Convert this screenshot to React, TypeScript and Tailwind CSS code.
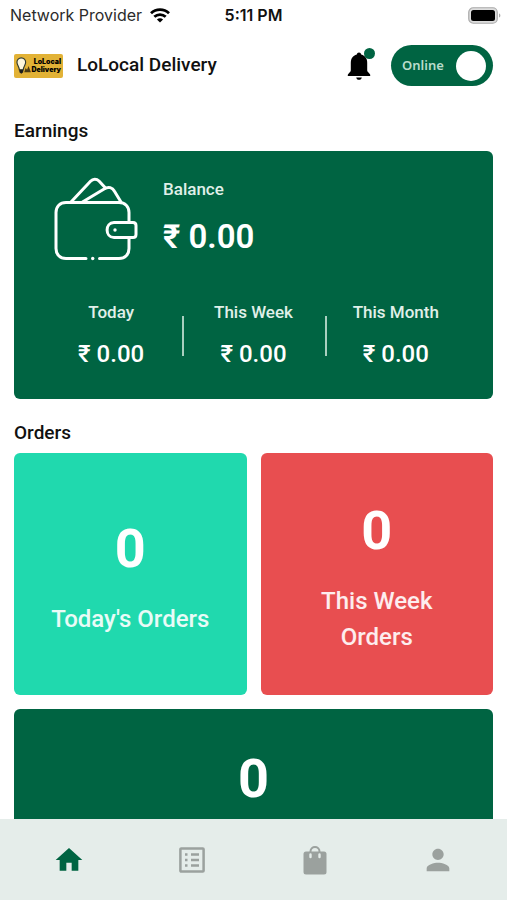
import { useState } from 'react'
import type { ReactNode } from 'react'
import clsx from 'clsx'
import { MdHome, MdPerson } from 'react-icons/md'

// ─── Data ─────────────────────────────────────────────────────────────────────

const EARNINGS = [
  { label: 'Today', amount: 0 },
  { label: 'This Week', amount: 0 },
  { label: 'This Month', amount: 0 },
]

const ORDERS = [
  { key: 'today', label: "Today's Orders", count: 0, className: 'bg-[#20d9ae] py-10' },
  { key: 'week', label: 'This Week Orders', count: 0, className: 'bg-[#e84e50] py-10' },
  { key: 'all', label: '', count: 0, className: 'col-span-2 bg-[#006442] pt-8 pb-20' },
]

type TabKey = 'home' | 'orders' | 'shop' | 'profile'

const TABS: { key: TabKey; label: string; icon: ReactNode }[] = [
  { key: 'home', label: 'Home', icon: <MdHome size={32} /> },
  { key: 'orders', label: 'Orders', icon: <ListIcon /> },
  { key: 'shop', label: 'Shop', icon: <BagIcon /> },
  { key: 'profile', label: 'Profile', icon: <MdPerson size={34} /> },
]

const rupees = (n: number) => `₹ ${n.toFixed(2)}`

// ─── Icons ────────────────────────────────────────────────────────────────────

function WifiIcon() {
  return (
    <svg width="20" height="15" viewBox="0 0 20 15" fill="none" stroke="#000" strokeWidth="2.8" aria-hidden="true">
      <path d="M1 5.2C6 .4 14 .4 19 5.2" />
      <path d="M4.3 8.8C7.6 5.8 12.4 5.8 15.7 8.8" />
      <path d="M10 14.6 6.9 11.5C8.6 9.9 11.4 9.9 13.1 11.5Z" fill="#000" stroke="none" />
    </svg>
  )
}

function BatteryIcon() {
  return (
    <svg width="33" height="17" viewBox="0 0 33 17" aria-hidden="true">
      <rect x="0.75" y="0.75" width="28.5" height="15.5" rx="4.5" fill="#ddd" stroke="#aaa" strokeWidth="1.2" />
      <rect x="3" y="3" width="24" height="11" rx="2.5" fill="#000" />
      <path d="M31 6.5v4c.8-.3 1.4-1.1 1.4-2S31.8 6.8 31 6.5Z" fill="#aaa" />
    </svg>
  )
}

function BellIcon() {
  return (
    <svg width="24" height="28" viewBox="0 0 24 28" fill="currentColor" aria-hidden="true">
      <path d="M12 0.5C10.800 .5 10 1.300 9.800 2.600C5.800 3.600 3.800 6.800 3.800 10.800V18.500C3.800 20 .8 21.800 .8 22.800V24H23.200V22.800C23.200 21.800 20.200 20 20.200 18.500V10.800C20.200 6.800 18.200 3.600 14.200 2.600C14 1.300 13.200 .5 12 .5Z" />
      <path d="M9.200 25.500H14.800C14.500 27 13.500 27.800 12 27.800S9.500 27 9.200 25.500Z" />
    </svg>
  )
}

function WalletIcon() {
  return (
    <svg
      width="84"
      height="84"
      viewBox="0 0 84 84"
      fill="none"
      stroke="#fff"
      strokeWidth="3"
      strokeLinecap="round"
      strokeLinejoin="round"
      aria-hidden="true"
    >
      {/* cards */}
      <path d="M17 25 36.5 4.2C39 1.5 42.5 1.5 45 4L51.5 11" />
      <path d="M28.5 25 50.5 11.7C54.5 9.2 58.5 10.5 60.3 14L67 25" />
      {/* body */}
      <path d="M32 81.500H12C6 81.500 2 77.500 2 71.500V35.500C2 29.500 6 25.500 12 25.500H65C71 25.500 75 29.500 75 35.500V45.500" />
      <path d="M75 60.500V71.500C75 77.500 71 81.500 65 81.500H45.500" />
      {/* clasp */}
      <path d="M60 45.500H79C81 45.500 82 46.500 82 48.500V57.500C82 59.500 81 60.500 79 60.500H60C50.800 60.500 50.800 45.500 60 45.500Z" />
      <circle cx="61" cy="53" r="1.7" fill="#fff" stroke="none" />
      <circle cx="38.7" cy="81.5" r="1.7" fill="#fff" stroke="none" />
    </svg>
  )
}

function ListIcon() {
  return (
    <svg width="26" height="26" viewBox="0 0 26 26" fill="none" stroke="currentColor" aria-hidden="true">
      <rect x="1.4" y="1.4" width="23.2" height="23.2" rx="0.8" strokeWidth="2.5" />
      <path d="M6 7.5H8.5M6 13H8.5M6 18.5H8.5" strokeWidth="2.5" />
      <path d="M12 7.5H20M12 13H20M12 18.5H20" strokeWidth="2.4" />
    </svg>
  )
}

function BagIcon() {
  return (
    <svg width="24" height="30" viewBox="0 0 24 30" aria-hidden="true">
      <rect x="0.5" y="6.5" width="23" height="23" rx="2.5" fill="currentColor" />
      <path d="M7.5 8.5V6.5C7.5 .5 16.5 .5 16.5 6.5V8.5" fill="none" stroke="currentColor" strokeWidth="2" />
      <path d="M7.5 9.5V12M16.5 9.5V12" stroke="#e5edea" strokeWidth="2.4" strokeLinecap="round" />
    </svg>
  )
}

// ─── Header ───────────────────────────────────────────────────────────────────

function StatusBar() {
  return (
    <div className="grid h-[30px] grid-cols-[1fr_auto_1fr] items-center px-2.5 font-['Inter',sans-serif] text-base">
      <div className="flex items-center gap-2 whitespace-nowrap text-[#2b2b2b]">
        Network Provider
        <WifiIcon />
      </div>
      <span className="font-semibold">5:11 PM</span>
      <div className="-mr-1 flex justify-end">
        <BatteryIcon />
      </div>
    </div>
  )
}

function Logo() {
  return (
    <div className="flex h-6 w-[49px] items-center justify-between rounded-xs bg-[#e2b236] px-0.5">
      <svg width="16" height="20" viewBox="0 0 16 20" aria-hidden="true">
        <path
          d="M5.5 1.5a4.5 4.5 0 0 1 4.5 4.7C10 9 7.8 10.5 7.5 14h-4C3.2 10.5 1 9 1 6.2A4.5 4.5 0 0 1 5.5 1.5Z"
          fill="#fdf6dc"
          stroke="#2f3b33"
          strokeWidth="1.2"
        />
        <path d="M3.5 14h4v2.5l-2 1.5-2-1.5Z" fill="#1c1c1c" />
        <path d="M8.5 16.5 10 12l1.5 2L13 10l2.5 6.5Z" fill="#4a3a14" />
      </svg>
      <div className="flex flex-col items-end font-['Inter',sans-serif] text-[7px] leading-2 font-black text-black">
        <span>LoLocal</span>
        <span>Delivery</span>
      </div>
    </div>
  )
}

function OnlineToggle() {
  const [online, setOnline] = useState(true)

  return (
    <label
      className={clsx(
        'flex h-[41px] w-[102px] cursor-pointer items-center justify-between rounded-full pr-[7px] pl-[11px]',
        online ? 'bg-[#006442]' : 'flex-row-reverse bg-gray-400'
      )}
    >
      <input
        type="checkbox"
        role="switch"
        className="sr-only"
        checked={online}
        onChange={e => setOnline(e.target.checked)}
      />
      <span className="font-['Noto_Sans',sans-serif] text-[13px] font-semibold text-[#b9dccb]">
        {online ? 'Online' : 'Offline'}
      </span>
      <span className="size-[30px] rounded-full bg-white" />
    </label>
  )
}

function Header() {
  return (
    <header className="flex h-[71px] items-center px-3.5">
      <Logo />
      <h1 className="ml-3.5 text-[19px] font-medium">LoLocal Delivery</h1>
      <button type="button" aria-label="Notifications" className="relative mr-5 ml-auto text-black">
        <BellIcon />
        <span className="absolute -top-1 -right-1 size-[11px] rounded-full bg-[#006442]" />
      </button>
      <OnlineToggle />
    </header>
  )
}

// ─── Sections ─────────────────────────────────────────────────────────────────

function SectionTitle({ children }: { children: ReactNode }) {
  return <h2 className="pb-2 text-[19px] leading-6 font-medium">{children}</h2>
}

function EarningsCard() {
  return (
    <div className="rounded-md bg-[#006442] px-[26px] pt-[26px] pb-7 text-white">
      <div className="flex gap-[25px] pl-3.5">
        <WalletIcon />
        <div>
          <p className="text-[17px] leading-6 font-medium text-[#e0f0e9]">Balance</p>
          <p className="mt-3.5 text-[33px] leading-11 font-semibold">{rupees(0)}</p>
        </div>
      </div>

      <dl className="mt-[39px] flex">
        {EARNINGS.map((e, i) => (
          <div key={e.label} className="relative flex-1 text-center">
            <dt className="text-[17px] leading-6 font-medium text-[#e0f0e9]">{e.label}</dt>
            <dd className="mt-[13px] text-2xl leading-[34px] font-medium">{rupees(e.amount)}</dd>
            {i > 0 && <span className="absolute top-4 left-0 h-10 w-0.5 bg-[#a9cfbf]" />}
          </div>
        ))}
      </dl>
    </div>
  )
}

function OrderTile({ label, count, className }: Omit<(typeof ORDERS)[number], 'key'>) {
  return (
    <div className={clsx('flex flex-col items-center justify-center rounded-md px-8 text-center text-white', className)}>
      <span className="text-[54px] leading-[76px] font-bold">{count}</span>
      {label && <span className="mt-3.5 text-2xl leading-9 font-medium text-white/90">{label}</span>}
    </div>
  )
}

function TabBar() {
  const [active, setActive] = useState<TabKey>('home')

  return (
    <nav className="grid h-[81px] shrink-0 grid-cols-4 bg-[#e5edea] px-[7px]">
      {TABS.map(t => (
        <button
          key={t.key}
          type="button"
          aria-label={t.label}
          onClick={() => setActive(t.key)}
          className={clsx('flex items-center justify-center', active === t.key ? 'text-[#006442]' : 'text-[#9ba19e]')}
        >
          {t.icon}
        </button>
      ))}
    </nav>
  )
}

// ─── App ──────────────────────────────────────────────────────────────────────

export default function App() {
  return (
    <div className="flex h-screen flex-col bg-white font-['Roboto',sans-serif] text-[#111]">
      <StatusBar />
      <Header />
      <main className="min-h-0 flex-1 overflow-y-auto px-3.5 pt-[18px] pb-3.5 [scrollbar-width:none]">
        <section>
          <SectionTitle>Earnings</SectionTitle>
          <EarningsCard />
        </section>

        <section className="mt-[22px]">
          <SectionTitle>Orders</SectionTitle>
          <div className="grid grid-cols-2 gap-3.5">
            {ORDERS.map(({ key, ...order }) => (
              <OrderTile key={key} {...order} />
            ))}
          </div>
        </section>
      </main>
      <TabBar />
    </div>
  )
}
